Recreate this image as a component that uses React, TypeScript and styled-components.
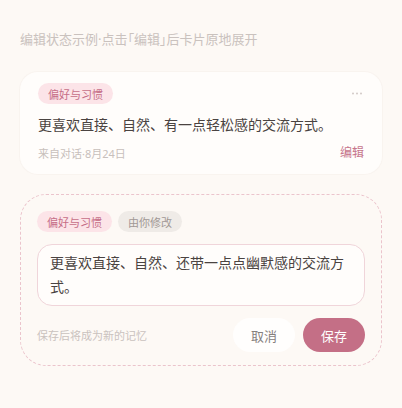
import styled, { createGlobalStyle } from "styled-components";

const GlobalStyle = createGlobalStyle`
  html, body {
    margin: 0;
    padding: 0;
    background: #fdf9f5;
  }
  body {
    font-family: "Noto Sans", "Noto Sans CJK SC", sans-serif;
  }
`;

const Page = styled.div`
  width: 402px;
  height: 408px;
  box-sizing: border-box;
  padding: 30px 20px 0;
  background: #fdf9f5;
`;

const Caption = styled.div`
  font-size: 13px;
  line-height: 18px;
  color: #cac2be;
  margin-bottom: 24px;
  font-feature-settings: "palt";
`;

const Card = styled.div`
  background: #fffdfb;
  border-radius: 18px;
  padding: 11px 18px 11px;
  box-shadow: 0 0 0 1px rgba(244, 237, 232, 0.45);
`;

const EditCard = styled.div`
  margin-top: 20px;
  border: 1.5px dashed #ebc4cc;
  border-radius: 26px;
  padding: 16px 16px 13px;
`;

const TopRow = styled.div`
  display: flex;
  align-items: center;
  justify-content: space-between;
`;

const Tags = styled.div`
  display: flex;
  gap: 6px;
`;

const Tag = styled.span<{ $muted?: boolean }>`
  display: inline-flex;
  align-items: center;
  height: 21px;
  padding: 0 10px;
  border-radius: 11px;
  font-size: 11px;
  background: ${(p) => (p.$muted ? "#efebe7" : "#fce4e8")};
  color: ${(p) => (p.$muted ? "#a19895" : "#c66e87")};
`;

const More = styled.svg`
  margin-right: 2px;
`;

const Body = styled.div`
  margin-top: 9px;
  font-size: 14px;
  line-height: 24px;
  color: #4a4341;
`;

const MetaRow = styled.div`
  margin-top: 8px;
  display: flex;
  align-items: center;
  justify-content: space-between;
  line-height: 18px;
`;

const Meta = styled.span`
  font-size: 11px;
  color: #c8c0bc;
`;

const EditLink = styled.span`
  font-size: 12px;
  color: #c6758b;
  margin-top: -3px;
`;

const TextBox = styled.div`
  margin-top: 12px;
  background: #fffdfb;
  border: 1px solid #f0d5da;
  border-radius: 15px;
  padding: 6px 12px 6px;
  font-size: 14px;
  line-height: 24px;
  color: #4a4341;
`;

const Footer = styled.div`
  margin-top: 12px;
  display: flex;
  align-items: center;
`;

const Hint = styled.span`
  flex: 1;
  font-size: 11px;
  color: #cac2be;
`;

const Button = styled.button<{ $primary?: boolean }>`
  width: 62px;
  height: 34px;
  border: none;
  border-radius: 17px;
  font-family: inherit;
  font-size: 13px;
  margin-left: 8px;
  background: ${(p) => (p.$primary ? "#c46f86" : "#fffefd")};
  color: ${(p) => (p.$primary ? "#ffffff" : "#86807d")};
`;

export default function App() {
  return (
    <Page>
      <GlobalStyle />
      <Caption>编辑状态示例·点击「编辑」后卡片原地展开</Caption>
      <Card>
        <TopRow>
          <Tag>偏好与习惯</Tag>
          <More width="10" height="3" viewBox="0 0 10 3">
            <circle cx="1" cy="1.5" r="1" fill="#d2cac6" />
            <circle cx="5" cy="1.5" r="1" fill="#d2cac6" />
            <circle cx="9" cy="1.5" r="1" fill="#d2cac6" />
          </More>
        </TopRow>
        <Body>更喜欢直接、自然、有一点轻松感的交流方式。</Body>
        <MetaRow>
          <Meta>来自对话·8月24日</Meta>
          <EditLink>编辑</EditLink>
        </MetaRow>
      </Card>
      <EditCard>
        <Tags>
          <Tag>偏好与习惯</Tag>
          <Tag $muted>由你修改</Tag>
        </Tags>
        <TextBox>更喜欢直接、自然、还带一点点幽默感的交流方式。</TextBox>
        <Footer>
          <Hint>保存后将成为新的记忆</Hint>
          <Button>取消</Button>
          <Button $primary>保存</Button>
        </Footer>
      </EditCard>
    </Page>
  );
}
